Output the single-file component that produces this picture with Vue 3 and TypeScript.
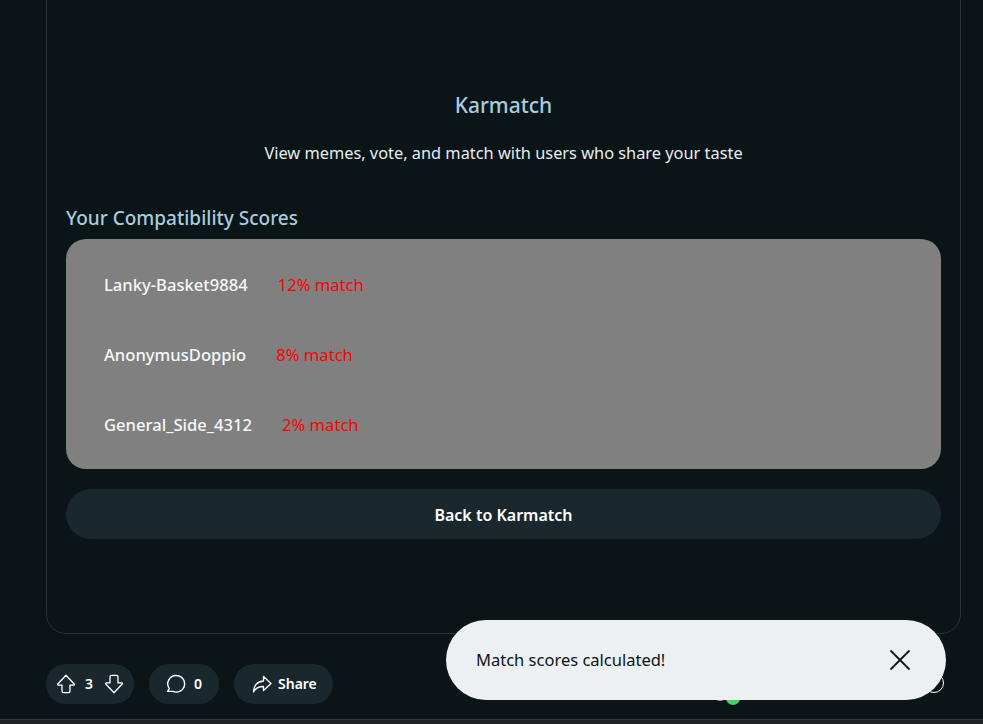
<script setup lang="ts">
const scores = [
  { name: 'Lanky-Basket9884', pct: 12 },
  { name: 'AnonymusDoppio', pct: 8 },
  { name: 'General_Side_4312', pct: 2 },
]
</script>

<template>
  <div class="page">
    <div class="main">
      <section class="card">
        <h1 class="title">Karmatch</h1>
        <p class="sub">View memes, vote, and match with users who share your taste</p>
        <h2 class="head">Your Compatibility Scores</h2>
        <div class="list">
          <div v-for="s in scores" :key="s.name" class="row">
            <span class="name">{{ s.name }}</span>
            <span class="pct">{{ s.pct }}% match</span>
          </div>
        </div>
        <button class="back">Back to Karmatch</button>
      </section>
      <div class="actions">
        <div class="pill vote">
          <svg width="20" height="20" viewBox="0 0 20 20" fill="none" stroke="#fff" stroke-width="1.3" stroke-linejoin="round"><path d="M10 1.3 1.6 10.2c-.3.4 0 .9.5.9H6v6c0 1 .7 1.6 1.6 1.6h4.8c.9 0 1.6-.6 1.6-1.6v-6h3.900c.5 0 .8-.5.5-.9L10 1.300Z"/></svg>
          <span class="num">3</span>
          <svg width="20" height="20" viewBox="0 0 20 20" fill="none" stroke="#fff" stroke-width="1.3" stroke-linejoin="round"><path d="M10 18.700l8.400-8.900c.3-.4 0-.9-.5-.9H14v-6c0-1-.7-1.600-1.600-1.600H7.600C6.700 1.300 6 1.900 6 2.900v6H2.100c-.5 0-.8.5-.5.9L10 18.700Z"/></svg>
        </div>
        <div class="pill comment">
          <svg width="20" height="20" viewBox="0 0 20 20" fill="none" stroke="#fff" stroke-width="1.4" stroke-linejoin="round"><path d="M10.500 1.500a8.300 8.300 0 1 1-3.500 15.900H1.500l1.800-2.800A8.300 8.300 0 0 1 10.500 1.500Z"/></svg>
          <span class="num">0</span>
        </div>
        <div class="pill share">
          <svg width="20" height="20" viewBox="0 0 20 20" fill="none" stroke="#fff" stroke-width="1.3" stroke-linejoin="round"><path d="M11.500 2.500 19 9.500l-7.500 7v-4C6.500 12.500 3.500 14 1.500 18c.3-6 3.500-10.500 10-11V2.500Z"/></svg>
          <span class="num">Share</span>
        </div>
      </div>
    </div>
    <div class="foot"></div>
    <span class="dot pink"></span>
    <span class="dot green"></span>
    <span class="ring"></span>
    <div class="toast">
      <span class="msg">Match scores calculated!</span>
      <svg width="24" height="24" viewBox="0 0 24 24" fill="none" stroke="#0b1416" stroke-width="1.800"><path d="M2.500 2.500l19 19M21.500 2.500l-19 19"/></svg>
    </div>
  </div>
</template>

<style>
html, body { margin: 0; background: #0b1416; overflow: hidden; }
</style>

<style scoped>
.page {
  position: relative;
  width: 983px;
  height: 724px;
  overflow: hidden;
  background: #0b1416;
  font-family: "Noto Sans", sans-serif;
  display: flex;
  flex-direction: column;
}
.main { flex: 1; padding: 0 22px 0 46px; }
.card {
  box-sizing: border-box;
  height: 654px;
  margin-top: -20px;
  padding: 110px 19px 0;
  border: 1px solid #2a3336;
  border-radius: 20px;
  display: flex;
  flex-direction: column;
}
.title {
  margin: 0;
  text-align: center;
  font-size: 21px;
  line-height: 28px;
  font-weight: 500;
  color: #a9cbdf;
}
.sub {
  margin: 22px 0 0;
  text-align: center;
  font-size: 16.350px;
  line-height: 24px;
  color: #e6edf2;
}
.head {
  margin: 40px 0 0;
  font-size: 19px;
  line-height: 26px;
  font-weight: 500;
  color: #a9cbdf;
}
.list {
  margin-top: 8px;
  height: 230px;
  box-sizing: border-box;
  padding: 10px 38px;
  background: #808080;
  border-radius: 20px;
  display: flex;
  flex-direction: column;
}
.row {
  height: 70px;
  flex: none;
  display: flex;
  align-items: center;
  gap: 30px;
  font-size: 16.600px;
}
.name { color: #f6f8fa; font-weight: 500; }
.pct { color: #ff0000; }
.back {
  margin-top: 20px;
  height: 50px;
  padding: 2px 0 0;
  border: 0;
  border-radius: 25px;
  background: #1a282e;
  color: #fff;
  font: 600 16px "Noto Sans", sans-serif;
}
.actions {
  display: flex;
  gap: 15px;
  margin-top: 30px;
}
.pill {
  height: 40px;
  border-radius: 20px;
  background: #1a282e;
  display: flex;
  align-items: center;
  box-sizing: border-box;
  color: #fff;
}
.num { font-size: 14px; line-height: 20px; font-weight: 600; }
.vote { width: 88px; padding-left: 10px; }
.vote .num { margin: 0 11px 0 9px; }
.comment { width: 70px; padding-left: 17px; gap: 8px; }
.share { width: 99px; padding-left: 18px; gap: 6px; }
.foot {
  height: 5px;
  background: #1f2224;
  border-top: 1px solid #33383a;
  box-sizing: border-box;
}
.dot { position: absolute; width: 14px; height: 14px; border-radius: 50%; }
.pink { left: 713px; top: 687px; background: #c68be0; }
.green { left: 726px; top: 691px; background: #46d160; }
.ring {
  position: absolute;
  left: 924px;
  top: 673px;
  width: 20px;
  height: 20px;
  border: 1.300px solid #fff;
  border-radius: 50%;
  box-sizing: border-box;
}
.toast {
  position: absolute;
  left: 446px;
  top: 620px;
  width: 500px;
  height: 80px;
  box-sizing: border-box;
  padding: 0 34px 0 30px;
  border-radius: 40px;
  background: #edf0f3;
  color: #0b1416;
  display: flex;
  align-items: center;
  justify-content: space-between;
  font-size: 16.500px;
}
.msg { margin-top: -2px; }
</style>
